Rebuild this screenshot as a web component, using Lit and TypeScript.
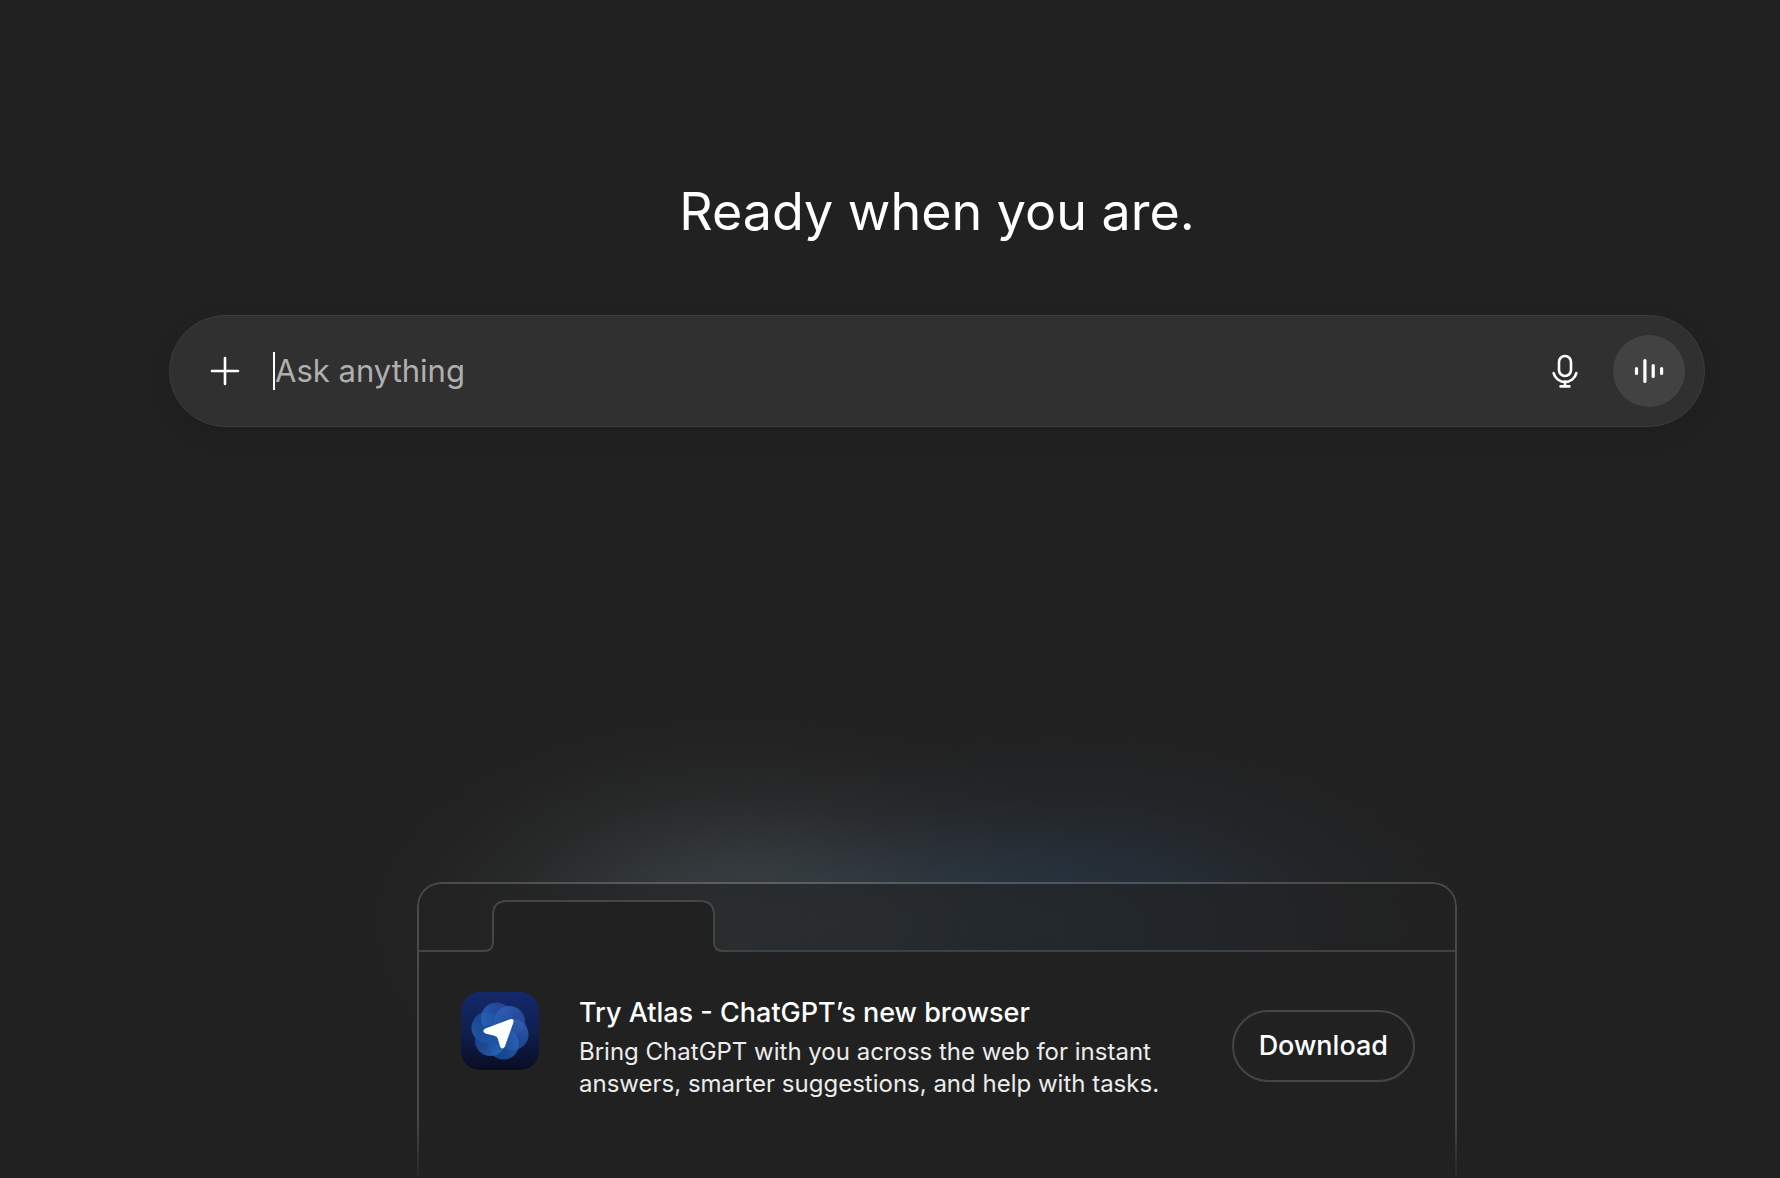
import { LitElement, css, html, svg } from "lit";
import { customElement } from "lit/decorators.js";

const plusIcon = html`
  <svg class="icon" viewBox="0 0 40 40" aria-hidden="true">
    <path d="M20 7v26M7 20h26" />
  </svg>
`;

const micIcon = html`
  <svg class="icon" viewBox="0 0 40 40" aria-hidden="true">
    <rect x="14" y="5" width="12" height="20" rx="6" />
    <path d="M8.6 22.2a11.8 11.8 0 0 0 22.8 0M20 30.5v5M15.6 35.4h8.8" />
  </svg>
`;

const voiceIcon = html`
  <svg class="icon voice" viewBox="0 0 40 40" aria-hidden="true">
    <path d="M7.5 17.6v4.8M15.9 9.6v20.8M24.2 14.6v10.8M32.6 17.6v4.8" />
  </svg>
`;

const petalAngles = [165, 105, 45, -15, -75, -135];

@customElement("atlas-logo")
export class AtlasLogo extends LitElement {
  static styles = css`
    :host {
      display: block;
      flex: none;
      width: 78px;
      height: 78px;
    }
    .logo {
      display: block;
      width: 100%;
      height: 100%;
      overflow: visible;
    }
  `;

  render() {
    return html`
      <svg class="logo" viewBox="0 0 78 78" aria-hidden="true">
        <defs>
          <linearGradient id="tile" x1="0" y1="0" x2="0" y2="1">
            <stop offset="0" stop-color="#14296b" />
            <stop offset="0.5" stop-color="#101f50" />
            <stop offset="1" stop-color="#0a0c22" />
          </linearGradient>
          <linearGradient id="petal" x1="0" y1="0.4" x2="1" y2="0.6">
            <stop offset="0" stop-color="#2a68bc" stop-opacity="0.8" />
            <stop offset="0.45" stop-color="#1f56a8" stop-opacity="0.8" />
            <stop offset="1" stop-color="#1a4896" stop-opacity="0.8" />
          </linearGradient>
          <linearGradient id="tint" x1="0" y1="1" x2="1" y2="0">
            <stop offset="0.4" stop-color="#4a44a0" stop-opacity="0" />
            <stop offset="1" stop-color="#5a4ab0" stop-opacity="0.35" />
          </linearGradient>
        </defs>
        <rect width="78" height="78" rx="19" fill="url(#tile)" />
        ${petalAngles.map(
          (angle) => svg`
            <g transform="rotate(${90 - angle} 39 39)">
              <circle cx="39" cy="25.5" r="15.5" fill="url(#petal)" />
            </g>`
        )}
        <circle cx="39" cy="39" r="27" fill="url(#tint)" />
        <path
          d="M24.3 36.4 49.2 27.2Q53.4 26 52.4 30.4L43.8 54.8Q41.6 58 39.2 55L36.8 46.6Q36 44.4 33.4 43.8L24.4 41.4Q20.2 39 24.3 36.4Z"
          fill="#fff"
        />
      </svg>
    `;
  }
}

@customElement("prompt-composer")
export class PromptComposer extends LitElement {
  static styles = css`
    :host {
      display: block;
    }
    .composer {
      display: flex;
      align-items: center;
      box-sizing: border-box;
      min-height: 112px;
      padding: 19px;
      border: 1px solid #3b3b3b;
      border-radius: 56px;
      background: #303030;
      box-shadow: 0 8px 24px rgba(0, 0, 0, 0.1);
    }
    .button {
      display: grid;
      place-items: center;
      flex: none;
      width: 72px;
      height: 72px;
      padding: 0;
      border: 0;
      border-radius: 50%;
      background: transparent;
      color: #fff;
      cursor: pointer;
    }
    .button.filled {
      margin-left: 12px;
      background: #424242;
    }
    .icon {
      width: 40px;
      height: 40px;
      fill: none;
      stroke: currentColor;
      stroke-width: 2.6;
      stroke-linecap: round;
    }
    .voice {
      stroke-width: 3.2;
    }
    .field {
      display: flex;
      align-items: center;
      flex: 1;
      min-width: 0;
      margin-left: 12px;
    }
    .caret {
      flex: none;
      width: 2px;
      height: 38px;
      background: #fff;
    }
    .input {
      flex: 1;
      min-width: 0;
      height: 48px;
      padding: 0;
      border: 0;
      outline: 0;
      background: transparent;
      color: #fff;
      font: 400 31px/48px Inter, "Liberation Sans", sans-serif;
    }
    .input::placeholder {
      color: #afafaf;
      opacity: 1;
    }
    .field:focus-within .caret {
      visibility: hidden;
    }
  `;

  render() {
    return html`
      <form class="composer" @submit=${(e: Event) => e.preventDefault()}>
        <button class="button" type="button" aria-label="Add files">${plusIcon}</button>
        <div class="field">
          <span class="caret"></span>
          <input class="input" type="text" placeholder="Ask anything" aria-label="Ask anything" />
        </div>
        <button class="button" type="button" aria-label="Dictate">${micIcon}</button>
        <button class="button filled" type="button" aria-label="Voice mode">${voiceIcon}</button>
      </form>
    `;
  }
}

@customElement("atlas-promo")
export class AtlasPromo extends LitElement {
  static styles = css`
    :host {
      display: block;
      position: relative;
    }
    .glow {
      position: absolute;
      inset: -200px -80px 0;
      pointer-events: none;
      background:
        radial-gradient(380px 220px at 33% 244px, rgba(150, 185, 200, 0.2), rgba(150, 185, 200, 0.145) 30%, rgba(150, 175, 185, 0.055) 60%, rgba(150, 165, 170, 0.015) 82%, transparent),
        radial-gradient(460px 220px at 60% 244px, rgba(60, 125, 190, 0.2), rgba(60, 120, 180, 0.15) 30%, rgba(60, 100, 150, 0.055) 60%, rgba(60, 90, 120, 0.015) 82%, transparent);
    }
    .card {
      position: relative;
      display: flex;
      flex-direction: column;
      box-sizing: border-box;
      min-height: 296px;
      padding: 2px 2px 0;
      border-radius: 24px 24px 0 0;
      overflow: hidden;
    }
    .outline {
      position: absolute;
      inset: 0;
      border: 2px solid rgba(255, 255, 255, 0.18);
      border-bottom: 0;
      border-radius: 24px 24px 0 0;
      pointer-events: none;
      -webkit-mask-image: linear-gradient(#000 80%, rgba(0, 0, 0, 0.15));
      mask-image: linear-gradient(#000 80%, rgba(0, 0, 0, 0.15));
    }
    .strip {
      display: flex;
      height: 68px;
      background: rgba(33, 33, 33, 0.6);
    }
    .tab {
      flex: none;
      width: 308px;
      height: 68px;
    }
    .tab-fill {
      fill: #212121;
    }
    .tab-line {
      fill: none;
      stroke: #434546;
      stroke-width: 2;
    }
    .rest {
      flex: 1;
      border-bottom: 2px solid #3e4144;
    }
    .body {
      display: flex;
      align-items: flex-start;
      flex: 1;
      padding: 40px 40px 56px 42px;
      background: #212121;
      color: #fff;
      font-family: Inter, "Liberation Sans", sans-serif;
    }
    .copy {
      flex: 1;
      margin-left: 40px;
    }
    .title {
      margin: 0 0 2px;
      font-size: 27px;
      font-weight: 500;
      line-height: 42px;
    }
    .text {
      max-width: 600px;
      margin: 0;
      color: #ececec;
      font-size: 24px;
      line-height: 32px;
    }
    .download {
      flex: none;
      box-sizing: border-box;
      height: 72px;
      margin-top: 18px;
      padding: 0 25px;
      border: 2px solid #454545;
      border-radius: 36px;
      background: transparent;
      color: #fff;
      font: 500 27px/32px Inter, "Liberation Sans", sans-serif;
      cursor: pointer;
    }
  `;

  render() {
    return html`
      <div class="glow"></div>
      <section class="card">
        <div class="strip">
          <svg class="tab" viewBox="0 0 308 68" aria-hidden="true">
            <path
              class="tab-fill"
              d="M0 67H65Q74 67 74 58V31Q74 17 88 17H281Q295 17 295 31V58Q295 67 304 67H308V68H0Z"
            />
            <path
              class="tab-line"
              d="M0 67H65Q74 67 74 58V31Q74 17 88 17H281Q295 17 295 31V58Q295 67 304 67H308"
            />
          </svg>
          <div class="rest"></div>
        </div>
        <div class="body">
          <atlas-logo></atlas-logo>
          <div class="copy">
            <h2 class="title">Try Atlas - ChatGPT’s new browser</h2>
            <p class="text">
              Bring ChatGPT with you across the web for instant answers, smarter suggestions, and help with tasks.
            </p>
          </div>
          <button class="download" type="button">Download</button>
        </div>
        <div class="outline"></div>
      </section>
    `;
  }
}

@customElement("app-root")
export class AppRoot extends LitElement {
  static styles = css`
    :host {
      display: block;
      background: #212121;
      font-family: Inter, "Liberation Sans", sans-serif;
    }
    .page {
      display: flex;
      flex-direction: column;
      align-items: center;
      box-sizing: border-box;
      min-height: 100vh;
      padding: 176px 75px 0 169px;
      overflow: hidden;
    }
    .heading {
      margin: 0 0 67px;
      color: #fff;
      font-size: 52px;
      font-weight: 400;
      line-height: 72px;
      text-align: center;
    }
    .composer {
      width: 100%;
      max-width: 1536px;
    }
    .promo {
      width: 100%;
      max-width: 1040px;
      margin-top: auto;
    }
  `;

  render() {
    return html`
      <main class="page">
        <h1 class="heading">Ready when you are.</h1>
        <prompt-composer class="composer"></prompt-composer>
        <atlas-promo class="promo"></atlas-promo>
      </main>
    `;
  }
}
